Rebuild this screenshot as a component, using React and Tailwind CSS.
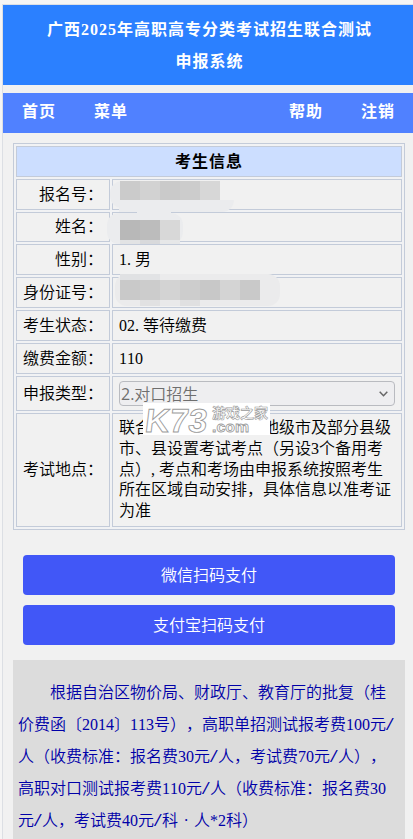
const SONG = "font-['Liberation_Serif','Noto_Sans_CJK_SC',serif]";

// Half-width characters each take half an em; the middle dot takes a full one.
function Song({ children, bold = false }) {
  const parts = children.match(/[\x21-\x7e]|·|[^\x21-\x7e·]+/g);
  return (
    <span className="whitespace-nowrap">
      {parts.map((p, i) => {
        if (p === "·") return <span key={i} className="inline-block w-4 text-center">·</span>;
        if (p === "/")
          return <span key={i} className="inline-block w-2 -indent-px font-['Liberation_Mono',monospace] leading-none">/</span>;
        if (/^[\x21-\x7e]$/.test(p))
          return <span key={i} className={bold ? "inline-block w-[9px]" : "inline-block w-2"}>{p}</span>;
        return <span key={i}>{p}</span>;
      })}
    </span>
  );
}

function Mosaic({ cells, className }) {
  return (
    <div className={`flex ${className}`}>
      {cells.map((c, i) => (
        <div key={i} className={`h-full w-5 ${c}`} />
      ))}
    </div>
  );
}

function Row({ label, height, children }) {
  return (
    <div className={`flex gap-0.5 ${height}`}>
      <div className="flex w-[94px] items-center justify-end border border-[#c3cbd9] bg-[#f1f1f1] pr-1.5">
        <Song>{label}</Song>
      </div>
      <div className="relative flex w-[290px] items-center border border-[#c3cbd9] bg-[#f1f1f1] px-1.5">{children}</div>
    </div>
  );
}

const PLACE = [
  "联合测试在全区14个地级市及部分县级",
  "市、县设置考试考点（另设3个备用考",
  "点）,考点和考场由申报系统按照考生",
  "所在区域自动安排，具体信息以准考证",
  "为准",
];

const NOTICE = [
  "　　根据自治区物价局、财政厅、教育厅的批复（桂",
  "价费函〔2014〕113号），高职单招测试报考费100元/",
  "人（收费标准：报名费30元/人，考试费70元/人），",
  "高职对口测试报考费110元/人（收费标准：报名费30",
  "元/人，考试费40元/科·人*2科）",
];

function Watermark() {
  return (
    <div className="absolute top-[-11px] left-[30px] z-10 h-8 w-[127px] bg-white">
      <svg width="127" height="32" viewBox="0 0 127 32" fill="#fff" stroke="#9a9a9a">
        <g fontFamily="'Liberation Sans', sans-serif" fontWeight="bold">
          <text transform="translate(1 28.5) skewX(-7)" fontSize="33" textLength="62" lengthAdjust="spacingAndGlyphs" strokeWidth="0.9">K73</text>
          <text x="69" y="28.5" fontSize="15" textLength="37" lengthAdjust="spacingAndGlyphs" strokeWidth="0.8">.com</text>
        </g>
        <text x="69" y="15" fontFamily="'Noto Sans CJK SC', sans-serif" fontSize="14" fontWeight="bold" textLength="56" strokeWidth="0.6">游戏之家</text>
      </svg>
    </div>
  );
}

export default function App() {
  return (
    <div className={`h-[839px] w-[413px] overflow-hidden bg-[#f5f5f5] pt-1 pl-0.5 text-base font-[350] text-black [text-spacing-trim:space-all] ${SONG}`}>
      <div className="h-full border-t border-l border-[#dcdfe4] bg-[#f1f1f1]">
        <header className="h-20 bg-[#2b80ff] pt-[9px] pl-[3px] text-center leading-8 font-bold tracking-[1px] text-white">
          <div><Song bold>广西2025年高职高专分类考试招生联合测试</Song></div>
          <div>申报系统</div>
        </header>
        <nav className="mt-2 flex h-10 justify-between bg-[#5081ff] pr-[18px] pl-[19px] leading-[38px] font-bold tracking-[1px] text-white">
          <div className="flex gap-[38px]"><span>首页</span><span>菜单</span></div>
          <div className="flex gap-[38px]"><span>帮助</span><span>注销</span></div>
        </nav>

        <section className="mt-2.5 ml-2.5 flex w-[392px] flex-col gap-0.5 border border-[#c3cbd9] bg-[#f1f2f4] p-0.5">
          <div className="flex h-[31px] items-center justify-center border border-[#c3cbd9] bg-[#ccdeff] font-bold tracking-[1px]">考生信息</div>
          <Row label="报名号：" height="h-[31px]">
            <div className="absolute top-px -left-[3px] h-[27px] w-6 rounded-xl bg-[#ebecee]" />
            <div className="absolute top-5 left-1.5 h-3 w-[115px] rounded-br-xl bg-[#ebecee]" />
            <Mosaic className="absolute top-px left-[7px] h-[19px]" cells={["bg-[#cbcbcb]", "bg-[#d2d2d2]", "bg-[#cacaca]", "bg-[#cccccc]", "bg-[#d7d7d7]"]} />
          </Row>
          <Row label="姓名：" height="h-[30px]">
            <div className="absolute -top-[3px] left-6 h-3 w-[34px] bg-[#ebecee]" />
            <div className="absolute top-0 -left-1.5 h-[31px] w-[76px] rounded-xl bg-[#ebecee]" />
            <Mosaic className="absolute top-[7px] left-[7px] h-5" cells={["bg-[#b8b8b8]", "bg-[#bcbcbc]", "bg-[#d8d8d8]"]} />
            <Mosaic className="absolute top-[27px] left-[7px] h-1" cells={["bg-[#e2e3e4]", "bg-[#d8d9db]", "bg-[#e6e7e8]"]} />
          </Row>
          <Row label="性别：" height="h-[31px]"><Song>1.男</Song></Row>
          <Row label="身份证号：" height="h-[31px]">
            <div className="absolute -top-1 left-0.5 h-8 w-[165px] rounded-xl bg-[#ebebec]" />
            <Mosaic className="absolute -top-1 left-[7px] h-1.5" cells={["bg-[#e0e1e3]", "bg-[#e2e3e5]"]} />
            <Mosaic className="absolute top-0.5 left-[7px] h-5" cells={["bg-[#c9c9c9]", "bg-[#cccccc]", "bg-[#d3d3d3]", "bg-[#cdcdcd]", "bg-[#c8c8c8]", "bg-[#d4d4d4]", "bg-[#c9c9c9]"]} />
            <Mosaic className="absolute top-[22px] left-[27px] h-1.5" cells={["bg-[#e1e1e2]", "bg-[#e9e9ea]", "bg-[#e0e0e1]"]} />
          </Row>
          <Row label="考生状态：" height="h-[31px]"><Song>02.等待缴费</Song></Row>
          <Row label="缴费金额：" height="h-[31px]"><Song>110</Song></Row>
          <Row label="申报类型：" height="h-[35px]">
            <div className="flex h-[25px] w-[276px] items-center justify-between rounded border border-[#b9bbc0] bg-[#eeeef0] pr-1.5 pl-px font-['Open_Sans','Noto_Sans_CJK_SC',sans-serif] text-[#6e6e6e]">
              <span><span className="font-normal">2.</span>对口招生</span>
              <svg width="9" height="6" viewBox="0 0 9 6" fill="none" stroke="#666" strokeWidth="1.5"><path d="M.7.7 4.5 4.7 8.3.7" /></svg>
            </div>
          </Row>
          <Row label="考试地点：" height="h-[114px]">
            <Watermark />
            <div className="leading-[20.7px]">
              {PLACE.map((t) => <div key={t}><Song>{t}</Song></div>)}
            </div>
          </Row>
        </section>

        <div className="mt-[25px] ml-5 flex w-[372px] flex-col gap-2.5 font-['Noto_Sans_CJK_SC',sans-serif] text-white">
          <button className="h-10 rounded bg-[#4157f7] pb-0.5">微信扫码支付</button>
          <button className="h-10 rounded bg-[#4157f7] pb-0.5">支付宝扫码支付</button>
        </div>

        <section className="mt-[15px] ml-2.5 h-[200px] w-[392px] bg-[#dcdcdc] pt-[17px] pl-[5px] leading-8 text-[#0000a8]">
          {NOTICE.map((t) => <div key={t}><Song>{t}</Song></div>)}
        </section>
      </div>
    </div>
  );
}
